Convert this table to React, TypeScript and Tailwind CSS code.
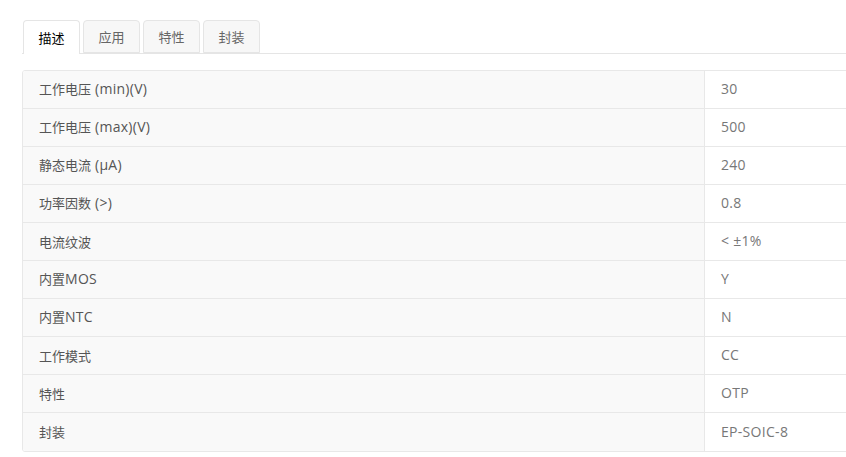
import { useState } from "react";

const TABS = ["描述", "应用", "特性", "封装"];

const ROWS: [string, string][] = [
  ["工作电压 (min)(V)", "30"],
  ["工作电压 (max)(V)", "500"],
  ["静态电流 (μA)", "240"],
  ["功率因数 (>)", "0.8"],
  ["电流纹波", "< ±1%"],
  ["内置MOS", "Y"],
  ["内置NTC", "N"],
  ["工作模式", "CC"],
  ["特性", "OTP"],
  ["封装", "EP-SOIC-8"],
];

// CJK runs at 13px, latin runs a bit wider like the original page font
function Mixed({ text }: { text: string }) {
  const parts = text.match(/[\u4e00-\u9fff]+|[^\u4e00-\u9fff]+/g) || [];
  return (
    <span className="whitespace-pre leading-none">
      {parts.map((p, i) =>
        /[\u4e00-\u9fff]/.test(p) ? (
          <span key={i} className="text-[13px] font-['Noto_Sans_CJK_SC',sans-serif]">
            {p}
          </span>
        ) : (
          <span key={i} className="text-[14px] tracking-[0.3px] font-['Open_Sans',sans-serif]">
            {p}
          </span>
        )
      )}
    </span>
  );
}

export default function App() {
  const [active, setActive] = useState(0);

  return (
    <div
      className="w-[846px] h-[457px] overflow-hidden bg-white pt-5 pl-[22px] text-[13px]"
      style={{ fontFamily: '"Noto Sans CJK SC", sans-serif' }}
    >
      {/* tabs */}
      <div className="flex gap-[3px] border-b border-[#e5e5e5] pl-px w-[840px] h-[34px]">
        {TABS.map((t, i) => (
          <button
            key={t}
            onClick={() => setActive(i)}
            className={
              i === active
                ? "w-[57px] h-[34px] rounded-t-[4px] border border-b-0 border-[#e5e5e5] bg-white text-black"
                : "w-[57px] h-[33px] rounded-t-[4px] border border-[#e5e5e5] bg-[#f7f7f7] text-[#666]"
            }
          >
            {t}
          </button>
        ))}
      </div>

      {/* spec table */}
      <div className="mt-4 w-[840px] rounded-[3px] border border-[#e8e8e8] overflow-hidden">
        {ROWS.map(([k, v], i) => (
          <div
            key={k}
            className={
              "flex h-[38px] items-center " + (i < ROWS.length - 1 ? "border-b border-[#e8e8e8]" : "")
            }
          >
            <div className="w-[682px] h-full flex items-center pl-4 pb-px bg-[#f9f9f9] text-[#555] border-r border-[#e8e8e8]">
              <Mixed text={k} />
            </div>
            <div className="flex-1 h-full flex items-center pl-4 pb-px text-[#777]">
              <Mixed text={v} />
            </div>
          </div>
        ))}
      </div>
    </div>
  );
}
